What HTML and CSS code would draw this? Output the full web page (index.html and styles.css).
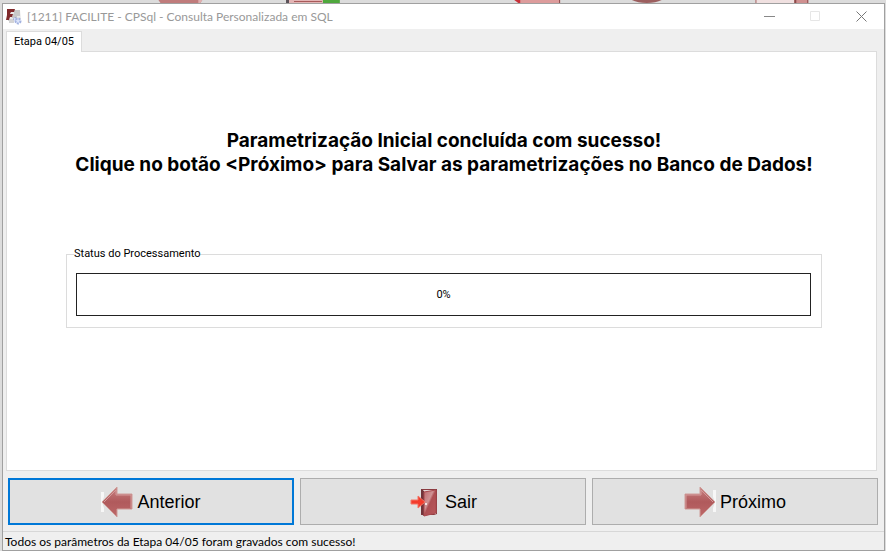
FILE: index.html
```html
<!DOCTYPE html>
<html lang="pt-BR">
<head>
<meta charset="utf-8">
<meta name="viewport" content="width=device-width, initial-scale=1">
<title>CPSql - Consulta Personalizada em SQL</title>
<link rel="stylesheet" href="styles.css">
</head>
<body>
<svg class="backdrop" viewBox="0 0 886 3" preserveAspectRatio="none" aria-hidden="true">
  <path d="M157 0h44l-2 3h-40z" fill="#c07c7c"/>
  <path d="M197 0h4l-2 3h-2z" fill="#e0b0b0"/>
  <path d="M285 0h3v3h-3z" fill="#5b5158"/>
  <path d="M288 0h34v3h-34z" fill="#e3b4b4"/>
  <path d="M293 1h28v1h-28z" fill="#a85a5a"/>
  <path d="M322 0h17v3h-17z" fill="#4fa83d"/>
  <path d="M514 0h7v3h-3z" fill="#c8323a"/>
  <path d="M520 0h40v3h-40z" fill="#dd9c9c"/>
  <path d="M559 0h1v3h-1z" fill="#8c4a4a"/>
  <path d="M632 0h30q-6 3-15 3t-15-3z" fill="#9c5f5f"/>
  <path d="M756 0h40v3h-40z" fill="#f0e0e0"/>
  <path d="M756 0h1v3h-1z" fill="#a06060"/>
  <path d="M795 0h14v3h-14z" fill="#cf9090"/>
  <path d="M795 0h2v3h-2zM808 0h1v3h-1z" fill="#8c4a4a"/>
</svg>
<main class="window">
  <header class="titlebar">
    <svg class="app-icon" viewBox="0 0 16 16" aria-hidden="true">
      <path d="M5 1h9l1 9H4z" fill="#e8e8e8"/>
      <path d="M8 2h6M8 4h6M7 6h7M6 8h5M2 11h6M3 13h5" stroke="#a9a9a9"/>
      <path d="M1 0h8L8 3H5L4 5h3L6 8H4l-1 3H0l1-5z" fill="#802a2c"/>
      <circle cx="9" cy="10" r="1.500" fill="#dbe4fa" stroke="#92a4d8" stroke-dasharray="2 1"/>
      <circle cx="12" cy="12" r="2.500" fill="#dbe4fa" stroke="#a3b2df" stroke-width="2" stroke-dasharray="2 1"/>
    </svg>
    <h1 class="title">[1211] FACILITE - CPSql - Consulta Personalizada em SQL</h1>
    <div class="controls">
      <button type="button" class="control" aria-label="Minimizar"><svg viewBox="0 0 11 11"><path d="M0 5.500h11" stroke="#888"/></svg></button>
      <button type="button" class="control" aria-label="Maximizar" disabled><svg viewBox="0 0 11 11"><path d="M.5.5h9v9h-9z" fill="none" stroke="#e6e6e6"/></svg></button>
      <button type="button" class="control" aria-label="Fechar"><svg viewBox="0 0 11 11"><path d="M.5.5l10 10M10.500.5l-10 10" stroke="#777"/></svg></button>
    </div>
  </header>
  <div class="tabs" role="tablist">
    <button type="button" class="tab" role="tab" id="tab-etapa" aria-selected="true" aria-controls="etapa">Etapa 04/05</button>
  </div>
  <section class="page" role="tabpanel" id="etapa" aria-labelledby="tab-etapa">
    <p class="message">Parametrização Inicial concluída com sucesso!<br>Clique no botão &lt;Próximo&gt; para Salvar as parametrizações no Banco de Dados!</p>
    <fieldset class="status-group">
      <legend>Status do Processamento</legend>
      <div class="progress" role="progressbar" aria-label="Status do Processamento" aria-valuemin="0" aria-valuemax="100" aria-valuenow="0">0%</div>
    </fieldset>
  </section>
  <nav class="actions">
    <button type="button" class="action focused">
      <svg class="icon" viewBox="0 0 32 32" aria-hidden="true">
        <defs><linearGradient id="red" x2="0" y2="1"><stop stop-color="#c88080"/><stop offset=".5" stop-color="#b05a5c"/><stop offset="1" stop-color="#bd6869"/></linearGradient></defs>
        <path d="M0 6h3v5l-2 5 2 6v4H0z" fill="#f7f7f7"/>
        <path d="M1 16L16 1v7h15v15H16v8z" fill="url(#red)" stroke="#cf9c98"/>
        <path d="M3 16L15 4v5h15v13" fill="none" stroke="#d39a9a"/>
      </svg>
      <span>Anterior</span>
    </button>
    <button type="button" class="action">
      <svg class="icon" viewBox="0 0 32 32" aria-hidden="true">
        <defs><linearGradient id="door" x2="1" y2="1"><stop stop-color="#bd6b6f"/><stop offset=".4" stop-color="#cf9294"/><stop offset=".5" stop-color="#ad4f53"/><stop offset="1" stop-color="#b9575b"/></linearGradient></defs>
        <path d="M12 3h16v25l-3 1H12z" fill="#8a3b40"/>
        <path d="M14 4h13v24H14z" fill="#e5d5d5"/>
        <path d="M12 3l3 2v25l-3-2z" fill="#71343a"/>
        <path d="M15 6l12-2v23l-12 3z" fill="url(#door)" stroke="#a8484d"/>
        <path d="M2 14h7v-4l7 6-7 6v-4H2z" fill="#f33b2c" stroke="#f47464"/>
        <circle cx="17" cy="18" r="1" fill="#fff"/>
      </svg>
      <span>Sair</span>
    </button>
    <button type="button" class="action">
      <svg class="icon" viewBox="0 0 32 32" aria-hidden="true">
        <path d="M32 4h-3v7l2 5-2 6v4h3z" fill="#f7f7f7"/>
        <path d="M31 16L16 1v7H1v15h15v8z" fill="url(#red)" stroke="#cf9c98"/>
        <path d="M29 16L17 4v5H2v13" fill="none" stroke="#d39a9a"/>
      </svg>
      <span>Próximo</span>
    </button>
  </nav>
  <footer class="statusbar">Todos os parâmetros da Etapa 04/05 foram gravados com sucesso!</footer>
</main>
</body>
</html>
```
FILE: styles.css
```css
* {
  box-sizing: border-box;
}

body {
  display: flex;
  flex-direction: column;
  min-height: 100vh;
  margin: 0;
  padding: 0 1px 0 2px;
  background: #dcdcdc;
  color: #000;
  font: 12px/16px Lato, "Open Sans", sans-serif;
}

button {
  margin: 0;
  padding: 0;
  border: 0;
  background: none;
  color: inherit;
  font: inherit;
}

.backdrop {
  display: block;
  flex: none;
  width: 100%;
  height: 3px;
}

.window {
  display: flex;
  flex: 1;
  flex-direction: column;
  border: 1px solid #a0a0a0;
  background: #efefef;
}

.titlebar {
  display: flex;
  align-items: center;
  height: 25px;
  padding-left: 3px;
  background: #fff;
}

.app-icon {
  flex: none;
  width: 16px;
  height: 16px;
}

.title {
  flex: 1;
  margin: 0 0 0 5px;
  color: #999;
  font-size: 12px;
  font-weight: 400;
  white-space: nowrap;
}

.controls {
  display: flex;
}

.control {
  display: grid;
  place-items: center;
  width: 46px;
  height: 25px;
}

.control svg {
  width: 11px;
  height: 11px;
}

.tabs {
  display: flex;
  padding: 2px 3px 0;
}

.tab {
  z-index: 1;
  height: 21px;
  margin-bottom: -1px;
  padding: 0 7px;
  border: 1px solid #dcdcdc;
  border-bottom: 0;
  background: #fff;
  font: 11px/18px Roboto, sans-serif;
}

.page {
  flex: 1;
  margin: 0 7px 0 3px;
  padding: 77px 54px 0 59px;
  border: 1px solid #dcdcdc;
  background: #fff;
}

.message {
  margin: 0;
  font: 700 19px/24px Inter, Arial, sans-serif;
  text-align: center;
}

.status-group {
  margin: 69px 0 0;
  padding: 11px 10px 11px 9px;
  border: 1px solid #dcdcdc;
  font: 11px/16px Roboto, sans-serif;
}

.status-group legend {
  margin-left: -2px;
  padding: 0;
}

.progress {
  display: grid;
  place-items: center;
  height: 43px;
  border: 1px solid #222;
}

.actions {
  display: grid;
  grid-template-columns: repeat(3, 1fr);
  gap: 6px;
  padding: 7px 6px 6px 5px;
}

.action {
  display: flex;
  align-items: center;
  justify-content: center;
  gap: 4px;
  height: 47px;
  border: 1px solid #adadad;
  background: #e1e1e1;
  font: 18px/24px "Liberation Sans", Arial, sans-serif;
}

.action.focused {
  border: 2px solid #0078d7;
}

.icon {
  width: 32px;
  height: 32px;
}

.statusbar {
  height: 19px;
  padding-left: 2px;
  border-top: 1px solid #d7d7d7;
  line-height: 20px;
}
```
